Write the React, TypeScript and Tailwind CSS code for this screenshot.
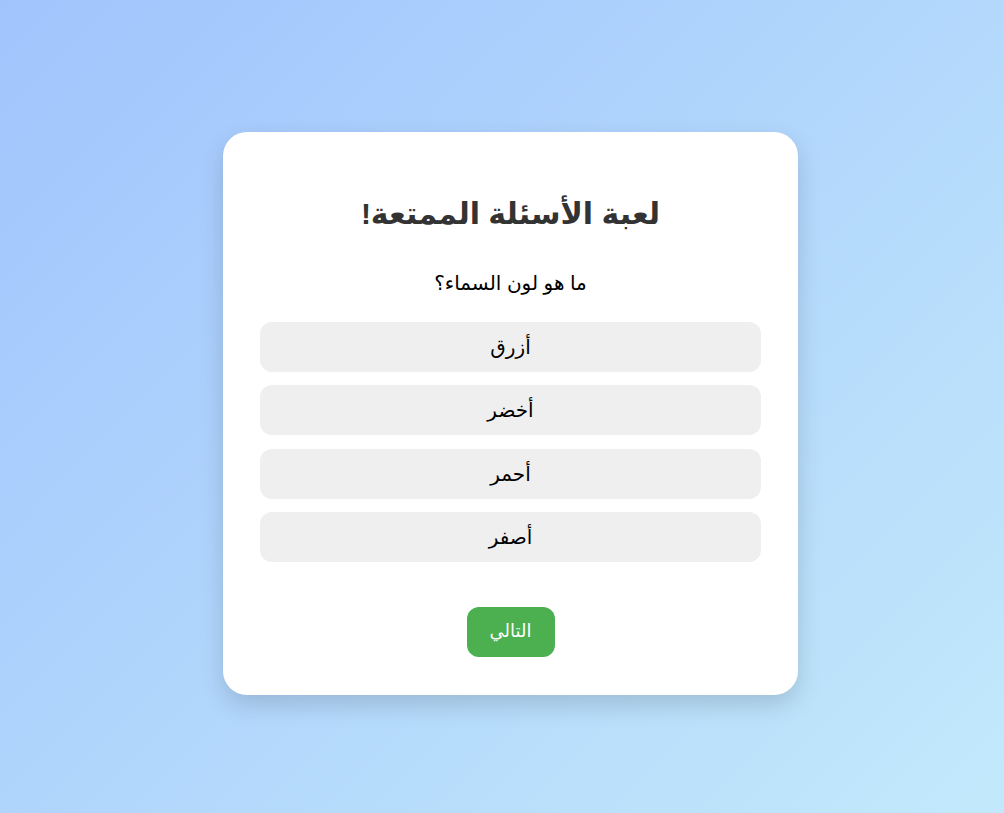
const options = ["أزرق", "أخضر", "أحمر", "أصفر"];

export default function App() {
  return (
    <div
      dir="rtl"
      className="min-h-[813px] w-full bg-[linear-gradient(135deg,#a1c4fd,#c2e9fb)] flex justify-center pt-[132px] pl-[17px] font-['Liberation_Sans','DejaVu_Sans',sans-serif]"
    >
      <div className="w-[575px] h-[563px] bg-white rounded-[24px] shadow-[0_10px_25px_rgba(0,0,0,0.15)] px-[37px] pt-[37px] flex flex-col items-center">
        <h1 className="mt-[26px] text-[30px] leading-[37px] font-bold text-[#333]">
          لعبة الأسئلة الممتعة!
        </h1>
        <p className="mt-[40px] text-[20px] leading-[23px] text-black">
          ما هو لون السماء؟
        </p>
        <div className="mt-[27px] w-full flex flex-col gap-[13.33px]">
          {options.map((o) => (
            <button
              key={o}
              className="h-[50px] w-full rounded-[12px] bg-[#efefef] text-[20px] text-black"
            >
              {o}
            </button>
          ))}
        </div>
        <button className="mt-[45px] h-[50px] w-[88px] rounded-[12px] bg-[#4caf50] text-white text-[18px]">
          التالي
        </button>
      </div>
    </div>
  );
}
